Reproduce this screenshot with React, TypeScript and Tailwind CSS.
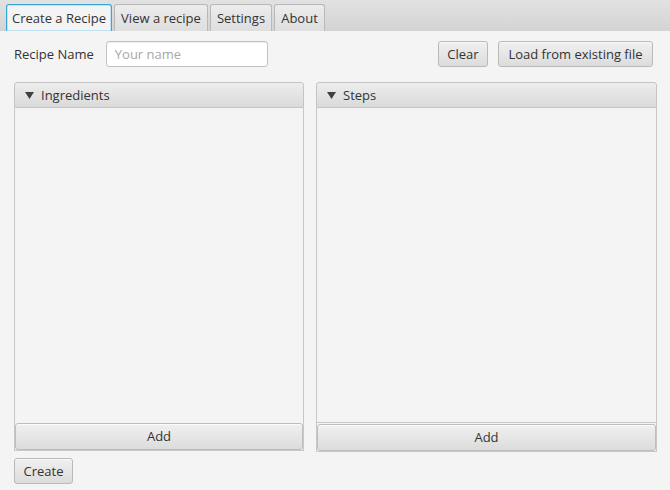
import React from 'react'

const font = { fontFamily: '"Open Sans", "Noto Sans", sans-serif' }

function Tab({ label, selected, width }: { label: string; selected?: boolean; width: string }) {
  return (
    <div
      className={
        'flex h-[27px] items-center justify-center rounded-t-[3px] border border-b-0 pt-[1px] text-[13px] text-[#333] ' +
        width +
        (selected
          ? ' border-[#3aa6d6] bg-[#f4f4f4] shadow-[inset_0_0_0_1px_#bfe3f3]'
          : ' border-[#b8b8b8] bg-gradient-to-b from-[#ececec] to-[#dedede]')
      }
    >
      {label}
    </div>
  )
}

function Btn({ label, className }: { label: string; className: string }) {
  return (
    <button
      className={
        'flex h-[26px] items-center justify-center rounded-[3px] border border-[#b9b9b9] bg-gradient-to-b from-[#f0f0f0] to-[#dcdcdc] pt-[1px] text-[13px] text-[#333] shadow-[inset_0_1px_0_#fafafa] ' +
        className
      }
    >
      {label}
    </button>
  )
}

function Panel({ title, width, gap }: { title: string; width: string; gap?: boolean }) {
  return (
    <div className={'flex flex-col ' + width}>
      <div className="flex h-[26px] items-center gap-[7px] rounded-t-[3px] border border-[#c4c4c4] bg-gradient-to-b from-[#ededed] to-[#dadada] pl-[10px] pt-[1px] text-[13px] text-[#333]">
        <svg width="9" height="7" viewBox="0 0 9 7">
          <path d="M0 0 H9 L4.5 7 Z" fill="#404040" />
        </svg>
        {title}
      </div>
      <div className="flex flex-1 flex-col border border-t-0 border-[#c8c8c8] bg-[#f4f4f4]">
        <div className={'flex-1' + (gap ? ' border-b border-[#c8c8c8]' : '')} />
        <Btn label="Add" className={'h-[27px] w-full rounded-[2px] border-[#bdbdbd]' + (gap ? ' mt-[1px]' : '')} />
      </div>
    </div>
  )
}

export default function App() {
  return (
    <div className="flex h-[490px] w-[670px] flex-col bg-[#f4f4f4]" style={font}>
      <div className="flex h-[31px] items-end gap-[2px] bg-gradient-to-b from-[#e2e2e2] to-[#d3d3d3] pl-[6px]">
        <Tab label="Create a Recipe" selected width="w-[106px]" />
        <Tab label="View a recipe" width="w-[94px]" />
        <Tab label="Settings" width="w-[62px]" />
        <Tab label="About" width="w-[51px]" />
      </div>

      <div className="mt-[10px] flex h-[26px] items-center pl-[14px] pr-[17px]">
        <span className="pt-[1px] text-[13px] text-[#333]">Recipe Name</span>
        <div className="ml-[12px] flex h-[26px] w-[162px] items-center rounded-[3px] border border-[#c2c2c2] bg-white pl-[8px] pt-[1px] text-[13px] text-[#a8a8a8] shadow-[inset_0_1px_1px_#eee]">
          Your name
        </div>
        <div className="flex-1" />
        <Btn label="Clear" className="w-[50px]" />
        <Btn label="Load from existing file" className="ml-[10px] w-[155px]" />
      </div>

      <div className="mt-[15px] flex h-[369px] items-start gap-[12px] pl-[14px]">
        <Panel title="Ingredients" width="w-[290px] h-[369px]" />
        <Panel title="Steps" width="w-[341px] h-[370px]" gap />
      </div>

      <div className="mt-[7px] pl-[14px]">
        <Btn label="Create" className="w-[59px]" />
      </div>
    </div>
  )
}
